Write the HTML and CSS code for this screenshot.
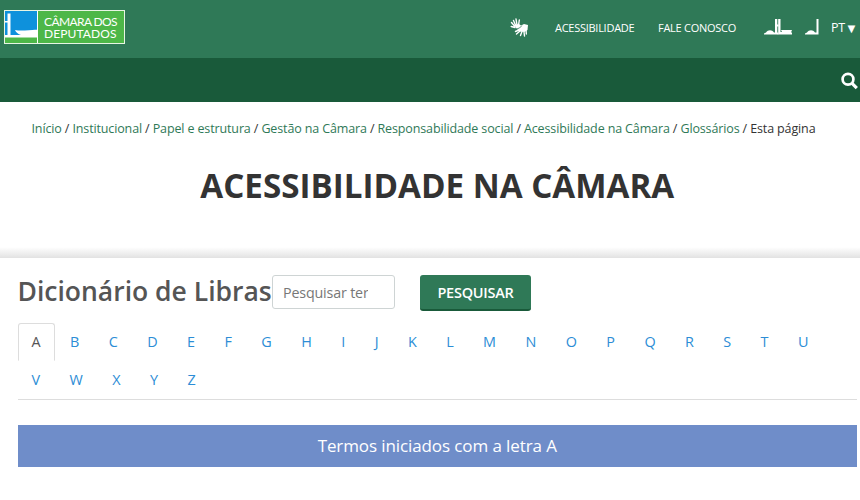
FILE: index.html
```html
<!DOCTYPE html>
<html lang="pt-BR">
<head>
<meta charset="utf-8">
<title>Dicionário de Libras</title>
<link rel="stylesheet" href="styles.css">
</head>
<body>
<header class="top">
  <a class="logo">
    <svg class="logo-mark" width="33" height="32" viewBox="0 0 33 32"><path fill="#0e91dc" d="M0 0h32v27H0z"/><path fill="#fff" d="M2.500 2.500h3V24h-3zM0 10h2.500v1.500H0zM0 24h16c-3-1-5-2.500-6-5 5 1 12 .500 22-.500V27H0zM32 0h1v32h-1z"/><path fill="#4db748" d="M0 26.500h32V32H0z"/></svg>
    <span class="logo-text"><span>CÂMARA DOS</span><span>DEPUTADOS</span></span>
  </a>
  <nav class="top-nav">
    <svg class="hands" width="19" height="19" viewBox="0 0 19 19" fill="none" stroke="#fff" stroke-linecap="round" stroke-linejoin="round"><path fill="#fff" stroke="none" d="M4 7l5-1 2 1.500 3-1.500 4 1-.5 5-3 2-5-.5-3-3z"/><path stroke-width="1.400" d="M4.500 8L1.500 4.500M5.500 7L3.500 2.500M7 7L6 1M8.500 7.500L9.300 2M5 9.500L1.200 8.500M9 12l-3.500 1.500M10 13l-3.500 3M12 13.500L10.500 17.500M14 14l.5 4M16 11l.3 5"/><path stroke="#2f7957" stroke-width=".8" d="M6.500 11l3-1L11.500 8"/></svg>
    <a class="link-access">ACESSIBILIDADE</a>
    <a class="link-contact">FALE CONOSCO</a>
    <svg class="congress" width="28" height="16" viewBox="0 0 28 16" fill="#fff"><path d="M0 15.500v-1l2-1c2-3 6-3 8 0h1V0h2.300v15.500z"/><path d="M14.200 0h2.300v13h1.500l-1-2h11l-1 2.500h1v2H14.200z"/><path d="M13 5.500h1.500v2H13zM13 13.500h1.500v2H13z"/></svg>
    <svg class="chamber" width="14" height="16" viewBox="0 0 14 16" fill="#fff"><path d="M0 15.500v-1l2-1c2-3 6-3 8 0h1.500V0H13.500v15.500z"/></svg>
    <a class="lang">PT <span>▼</span></a>
  </nav>
</header>
<div class="menu-bar">
  <svg width="17" height="18" viewBox="0 0 17 18" fill="none" stroke="#fff"><circle cx="7" cy="7.200" r="5.400" stroke-width="2.700"/><path d="M10.800 11.200L15.800 16.200" stroke-width="3.200"/></svg>
</div>
<section class="intro">
  <nav class="crumbs"><a>Início</a> / <a>Institucional</a> / <a>Papel e estrutura</a> / <a>Gestão na Câmara</a> / <a>Responsabilidade social</a> / <a>Acessibilidade na Câmara</a> / <a>Glossários</a> / Esta página</nav>
  <h1>ACESSIBILIDADE NA CÂMARA</h1>
</section>
<main>
  <form class="search">
    <h2>Dicionário de Libras</h2>
    <input type="text" placeholder="Pesquisar termo">
    <button type="button">PESQUISAR</button>
  </form>
  <nav class="letters">
    <a class="active">A</a><a>B</a><a>C</a><a>D</a><a>E</a><a>F</a><a>G</a><a>H</a><a>I</a><a>J</a><a>K</a><a>L</a><a>M</a><a>N</a><a>O</a><a>P</a><a>Q</a><a>R</a><a>S</a><a>T</a><a>U</a><a>V</a><a>W</a><a>X</a><a>Y</a><a>Z</a>
  </nav>
  <h3>Termos iniciados com a letra A</h3>
</main>
</body>
</html>
```
FILE: styles.css
```css
* { box-sizing: border-box; }
body { margin: 0; height: 500px; overflow: hidden; background: #fff; color: #333; font-family: "Open Sans", sans-serif; }
h1, h2, h3 { margin: 0; }
svg { display: block; flex: none; }
.top { height: 58px; background: #2f7957; display: flex; justify-content: space-between; align-items: flex-start; color: #fff; padding: 10px 4px 0; }
.logo { display: flex; width: 121px; height: 34px; border: 1px solid #e8f5e4; background: #4db748; }
.logo-text { display: flex; flex-direction: column; padding: 5px 0 0 6px; font: 12px/12px Lato, sans-serif; letter-spacing: -.6px; white-space: nowrap; }
.logo-text span + span { letter-spacing: .1px; }
.top-nav { display: flex; align-items: center; height: 34px; font-size: 11px; letter-spacing: -.27px; white-space: nowrap; }
.hands { margin-right: 26px; }
.link-access { width: 103px; }
.link-contact { width: 106px; }
.congress { margin-right: 13px; }
.chamber { margin-right: 12px; }
.lang { display: flex; align-items: center; justify-content: space-between; width: 25px; font-size: 12.500px; line-height: 16px; padding-top: 2px; }
.lang span { font-size: 13px; line-height: 12px; letter-spacing: 0; }
.menu-bar { height: 44px; background: #195a3a; display: flex; justify-content: flex-end; padding: 14px 2px 0 0; }
.intro { height: 156px; padding-top: 18px; background: linear-gradient(#fff 0 145px, #e2e2e2 156px); }
.crumbs { padding-left: 31.500px; font-size: 12.500px; letter-spacing: -.13px; line-height: 18px; white-space: nowrap; }
.crumbs a { color: #2f7957; }
h1 { margin-top: 25px; padding-left: 14.500px; text-align: center; font-size: 33.200px; line-height: 46px; font-weight: 700; white-space: nowrap; }
main { padding: 17px 3px 0 17.500px; }
.search { display: flex; height: 48px; align-items: flex-start; }
h2 { width: 254.500px; font-size: 26.500px; line-height: 32px; font-weight: 600; color: #555; white-space: nowrap; }
input { width: 122.500px; height: 34px; padding: 0 26px 0 10px; border: 1px solid #ced4d4; border-radius: 3px; font: 14.300px "Open Sans", sans-serif; letter-spacing: -.17px; }
input::placeholder { color: #777; }
button { width: 111px; height: 36px; margin-left: 25.500px; border: 0; border-bottom: 2px solid #195a3a; border-radius: 3px; background: #2f7957; color: #fff; font: 600 14.500px "Open Sans", sans-serif; letter-spacing: -.25px; padding: 0; }
.letters { display: flex; flex-wrap: wrap; border-bottom: 1px solid #ddd; font-size: 14.400px; line-height: 20px; height: 77px; align-content: flex-start; }
.letters a { height: 37.500px; padding: 8px 13px; border: 1px solid transparent; color: #2c8dd6; margin-right: 1.420px; }
.letters .active { border-color: #ddd; border-bottom-color: #fff; border-radius: 3px 3px 0 0; color: #555; }
h3 { margin-top: 25px; height: 42px; background: #6f8dc9; color: #fff; text-align: center; font-size: 17px; letter-spacing: -.1px; line-height: 42px; font-weight: 400; }
```
